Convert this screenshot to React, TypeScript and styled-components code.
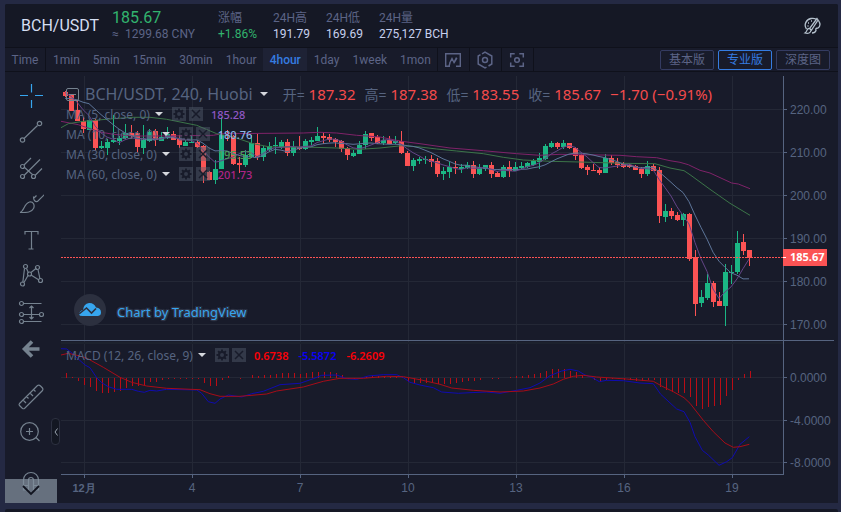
import React from 'react';
import styled, { createGlobalStyle } from 'styled-components';

const Global = createGlobalStyle`
  *, *::before, *::after { box-sizing: border-box; }
  body { margin: 0; background: #242943; font-family: Roboto, "Noto Sans CJK SC", sans-serif; font-size: 12px; color: #c7cce6; }
  button { font: inherit; color: inherit; background: none; border: 0; padding: 0; cursor: pointer; }
`;

const Page = styled.div`
  min-height: 100vh;
  padding: 4px 3px 0 5px;
  display: flex;
  flex-direction: column;
  gap: 6px;
  overflow: hidden;
`;
const Panel = styled.section`
  background: #181b2a;
  border-radius: 2px 2px 0 0;
  overflow: hidden;
`;
const NextPanel = styled.section`
  flex: 1;
  min-height: 3px;
  background: #151825;
  border-radius: 2px 2px 0 0;
`;
const Header = styled.header`
  height: 44px;
  display: flex;
  align-items: center;
  padding: 0 16px;
  background: #151825;
  border-bottom: 1px solid #0f111b;
`;
const Pair = styled.h1`
  margin: 0 12px 0 0;
  width: 79px;
  font-size: 16px;
  font-weight: 400;
  line-height: 20px;
  color: #d5def2;
  white-space: nowrap;
`;
const Stat = styled.div<{ $width: number }>`
  width: ${(p) => p.$width}px;
  display: flex;
  flex-direction: column;
  line-height: 16px;
  white-space: nowrap;
`;
const StatLabel = styled.span`
  color: #5c6486;
`;
const StatValue = styled.span<{ $tone?: 'up' | 'muted'; $large?: boolean }>`
  color: ${(p) => (p.$tone === 'up' ? '#32b36e' : p.$tone === 'muted' ? '#5c6486' : '#c7d0ee')};
  font-size: ${(p) => (p.$large ? 16 : 12)}px;
`;
const Approx = styled.span`
  display: inline-block;
  min-width: 10px;
`;
const ThemeButton = styled.button`
  margin-left: auto;
  width: 20px;
  height: 20px;
  color: #b4c0cc;
`;
const Toolbar = styled.nav`
  height: 24px;
  display: flex;
  align-items: stretch;
  border-bottom: 1px solid #0f111b;
  color: #5c6486;
`;
const Period = styled.button<{ $active?: boolean; $first?: boolean }>`
  padding: 0 6px 0 7px;
  white-space: nowrap;
  ${(p) => p.$first && 'border-right: 1px solid #0f111b; padding: 0 6px; min-width: 41px;'}
  ${(p) => p.$active && 'color: #357ce1; background: #1e2235; font-weight: 500;'}
`;
const IconTool = styled.button<{ $first?: boolean }>`
  width: 32px;
  display: flex;
  align-items: center;
  justify-content: center;
  border-right: 1px solid #0f111b;
  ${(p) => p.$first && 'border-left: 1px solid #0f111b; width: 33px;'}
`;
const Modes = styled.div`
  margin-left: auto;
  padding-right: 8px;
  display: flex;
  align-items: center;
  gap: 4px;
`;
const Mode = styled.button<{ $active?: boolean }>`
  width: 54px;
  height: 20px;
  border: 1px solid ${(p) => (p.$active ? '#357ce1' : '#343b61')};
  border-radius: 2px;
  color: ${(p) => (p.$active ? '#357ce1' : '#5c6486')};
  line-height: 18px;
`;
const Body = styled.div`
  display: grid;
  grid-template-columns: 56px minmax(0, 1fr) 55px;
  height: 431px;
`;
const Tools = styled.aside`
  position: relative;
  display: flex;
  flex-direction: column;
  padding: 6px 0 0 8px;
  color: #75828f;
`;
const Tool = styled.button<{ $gap?: number; $on?: boolean }>`
  flex: none;
  width: 36px;
  height: 36px;
  margin-top: ${(p) => p.$gap ?? 0}px;
  display: flex;
  align-items: center;
  justify-content: center;
  color: ${(p) => (p.$on ? '#37a6ef' : '#75828f')};
`;
const ScrollDown = styled.button`
  position: absolute;
  left: 0;
  bottom: 0;
  width: 52px;
  height: 24px;
  background: rgba(128, 142, 155, 0.75);
  color: #11141f;
`;
const Collapse = styled.button`
  position: absolute;
  right: 1px;
  top: 346px;
  width: 9px;
  height: 27px;
  display: flex;
  align-items: center;
  justify-content: center;
  background: #131722;
  border: 1px solid #2c3040;
  border-radius: 4px;
  color: #9aa5b0;
`;
const Plot = styled.div`
  position: relative;
  min-width: 0;
  overflow: hidden;
`;
const Canvas = styled.svg`
  display: block;
  width: 100%;
  height: 431px;
  font-family: "Liberation Sans", sans-serif;
  font-size: 12px;
`;
const Legend = styled.div`
  position: absolute;
  left: 5px;
  top: 12px;
  font-family: "Noto Sans", "Noto Sans CJK SC", sans-serif;
  color: #566480;
  white-space: nowrap;
`;
const TitleRow = styled.div`
  height: 20px;
  display: flex;
  align-items: center;
  font-size: 16px;
`;
const Toggle = styled.button`
  width: 13px;
  height: 13px;
  margin-right: 6px;
  border: 1px solid #75828f;
  border-radius: 2px;
  display: flex;
  align-items: center;
  justify-content: center;
`;
const Bar = styled.span`
  width: 7px;
  height: 1px;
  background: #75828f;
`;
const Caret = styled.span<{ $wide?: boolean }>`
  width: 0;
  height: 0;
  margin: 0 6px 0 ${(p) => (p.$wide ? 7 : 2)}px;
  border: 4px solid transparent;
  border-top-color: #d5d8dd;
  border-bottom: 0;
`;
const Quote = styled.span`
  margin-left: 9px;
  font-size: 14px;
`;
const Price = styled.span`
  font-size: 15px;
  color: #f54b4c;
`;
const Study = styled.div`
  height: 20px;
  display: flex;
  align-items: center;
  gap: 3px;
  font-size: 12px;
`;
const StudyButton = styled.button`
  width: 14px;
  height: 14px;
  display: flex;
  align-items: center;
  justify-content: center;
  background: rgba(84, 96, 110, 0.45);
  color: #181b2a;
`;
const StudyValue = styled.span<{ $color: string; $bold?: boolean }>`
  margin-left: 5px;
  font-family: "Noto Sans", sans-serif;
  font-size: 11px;
  font-weight: ${(p) => (p.$bold ? 600 : 500)};
  color: ${(p) => p.$color};
  & + & { margin-left: 7px; }
`;
const MacdLegend = styled(Legend)`
  top: 273px;
`;
const Credit = styled.a`
  position: absolute;
  left: 13px;
  top: 222px;
  display: flex;
  align-items: center;
  gap: 11px;
  color: #37a6ef;
  font: 13px/20px "Noto Sans", sans-serif;
  text-decoration: none;
  text-shadow: 0 0 2px #363c4e, 1px 1px 1px #363c4e, -1px -1px 1px #363c4e, 1px -1px 1px #363c4e, -1px 1px 1px #363c4e;
`;
const CreditText = styled.span`
  padding-top: 4px;
`;

/* One candle per entry: direction, high, body top, body bottom, low (thirds of a pixel). */
const CANDLES = `
R 57 60 73 76|R 65 67 116 116|R 85 114 147 147|R 136 147 172 183|G 144 144 175 175|R 142 143 228 237
G 208 222 228 231|G 202 210 228 249|G 130 204 210 212|G 192 198 207 218|G 155 183 198 200|R 160 183 192 200
R 178 183 225 244|G 158 204 228 246|G 172 180 207 210|R 172 178 204 222|G 180 195 207 207|G 165 186 198 200
R 178 185 203 203|R 190 200 219 228|G 205 210 222 222|G 190 210 213 214|R 205 210 225 229|R 220 222 303 333
R 296 300 325 325|G 265 291 324 336|G 136 190 291 291|R 175 190 193 207|R 190 192 276 280|R 255 273 278 303
G 235 249 280 284|G 190 213 254 257|R 187 213 255 264|G 222 227 255 267|G 210 222 234 238|G 195 219 223 246
G 205 210 225 230|R 200 210 243 252|G 207 225 243 252|R 192 225 231 234|G 200 207 231 234|G 195 204 210 220
G 165 192 206 207|R 180 192 198 216|R 186 195 204 210|R 197 201 210 226|R 205 207 231 240|R 225 228 249 264
G 235 243 252 254|G 207 219 245 246|G 178 186 219 231|R 183 183 198 207|R 190 195 213 215|G 192 204 213 219
R 192 204 215 216|G 192 207 213 216|R 177 207 243 246|R 237 243 282 282|G 258 264 282 297|G 255 261 266 276
G 252 260 263 276|R 249 261 270 285|R 258 267 306 315|G 285 297 306 324|G 270 285 300 318|R 267 285 289 306
G 276 285 290 303|G 270 279 288 290|R 267 279 305 318|G 276 288 306 309|G 278 279 291 297|R 270 279 306 318
R 297 303 315 315|G 280 285 315 318|R 267 285 297 315|G 270 285 297 297|G 270 281 288 290|G 270 273 285 288
G 262 266 279 282|G 243 258 270 291|G 216 222 261 264|G 207 213 225 228|R 210 213 225 230|G 204 213 225 231
R 213 213 228 231|R 225 228 251 264|R 246 249 288 291|R 280 285 294 309|R 276 294 297 297|R 285 293 303 309
G 246 258 303 303|R 249 258 273 279|R 258 269 280 288|R 270 275 284 288|R 275 278 286 288|R 278 282 293 294
R 285 291 306 318|G 267 282 306 312|R 275 281 297 297|R 285 294 432 453|G 396 417 435 450|R 408 417 432 441
R 421 429 444 447|G 423 426 444 462|R 423 426 561 567|R 534 555 696 732|G 654 675 693 705|G 606 633 678 685
R 627 633 690 705|R 660 687 702 702|G 576 600 702 762|G 579 599 603 636|G 477 513 600 606|R 486 510 537 549
R 534 534 558 582`
  .trim()
  .split(/[|\n]/)
  .map((row) => {
    const [dir, ...v] = row.split(' ');
    return { up: dir === 'G', v: v.map(Number) };
  });

const HISTOGRAM = [
  15, 2, -9, -22, -27, -38, -45, -46, -42, -40, -31, -24, -24, -22, -12, -12, -6, -3, -3, -3, -3, -3, -3, -15, -25, -25,
  -6, 5, 1, -3, 0, 8, 5, 8, 10, 13, 16, 14, 14, 11, 15, 17, 17, 17, 17, 15, 8, -2, -2, -1, 4, 5, 5, 6, 4, 5, 2, -12,
  -15, -15, -15, -15, -18, -18, -18, -15, -12, -8, -8, -6, 0, -2, -2, 0, 3, 5, 6, 9, 12, 15, 22, 26, 26, 26, 22, 17, 8,
  1, -6, -11, -6, -4, -3, -6, -6, -9, -8, -6, -6, -27, -36, -42, -45, -44, -57, -84, -93, -87, -84, -81, -54, -36, -6,
  11, 20,
];

const MA60 =
  '183,148 235,158 300,180 340,187 400,192 500,192 640,190 665,185 810,184 910,183 960,181 1010,183 1070,190 1140,195 1205,208 1260,215 1350,228 1450,236 1550,245 1620,250 1680,247 1740,248 1860,250 1910,254 1970,257 2010,266 2040,271 2065,278 2100,295 2130,303 2195,333 2215,336 2250,350';
const MA30 =
  '183,167 205,155 250,148 340,140 400,136 450,136 500,142 590,160 650,185 700,195 760,215 810,225 910,225 1010,228 1080,232 1140,228 1205,221 1260,225 1310,231 1370,237 1450,245 1510,256 1570,264 1650,268 1740,270 1870,274 1965,275 2010,288 2052,296 2070,308 2130,352 2190,394 2250,430';
const MACD =
  '183,41 200,42 213,52 235,72 255,90 270,98 290,128 305,143 325,155 350,163 395,163 415,169 433,172 450,166 470,168 500,163 590,165 605,175 625,200 645,205 660,192 685,180 725,186 755,176 790,169 840,149 900,145 940,131 965,121 1010,120 1040,131 1070,133 1105,123 1150,119 1190,119 1210,128 1230,142 1260,150 1300,158 1325,171 1375,175 1410,173 1460,171 1500,175 1550,166 1590,158 1620,144 1650,122 1685,108 1710,103 1735,108 1755,120 1775,127 1798,140 1820,136 1870,137 1920,144 1960,146 1982,178 2030,222 2052,230 2070,262 2085,305 2107,346 2125,360 2157,391 2180,380 2197,368 2220,328 2248,305';
const SIGNAL =
  '183,60 205,55 240,63 265,72 310,97 360,127 395,142 440,153 500,160 600,164 630,176 660,184 720,184 800,177 830,168 910,156 970,139 1020,130 1090,130 1160,124 1210,125 1260,134 1320,148 1355,159 1420,166 1500,171 1570,168 1620,159 1660,147 1690,133 1720,124 1750,121 1790,126 1880,132 1960,139 1985,153 2020,170 2052,188 2070,205 2110,256 2140,290 2175,324 2200,337 2220,335 2248,328';

const toPoints = (src: string, top: number) =>
  src
    .split(' ')
    .map((pair) => {
      const [x, y] = pair.split(',').map(Number);
      return `${(x / 3 - 61).toFixed(1)},${(y / 3 + top).toFixed(1)}`;
    })
    .join(' ');

const LEAD_IN = [110, 108, 106, 104, 100, 62, 60, 60, 58, 58];
const CLOSES = [...LEAD_IN, ...CANDLES.map((c) => (c.up ? c.v[1] : c.v[2]))];
const average = (n: number) =>
  CANDLES.map((_, i) => {
    const end = i + LEAD_IN.length + 1;
    const sum = CLOSES.slice(end - n, end).reduce((a, b) => a + b, 0);
    return `${i * 6 + 4},${(sum / n / 3).toFixed(1)}`;
  }).join(' ');

const PRICES = [220, 210, 200, 190, 180, 170];
const DAYS = ['12月', '4', '7', '10', '13', '16', '19'];
const MACD_TICKS: [string, number][] = [['0.0000', 305], ['-4.0000', 348], ['-8.0000', 390]];
const priceY = (i: number) => 37 + i * 43;

function Chart() {
  return (
    <Canvas role="img" aria-label="BCH/USDT 240">
      <g fill="#242836" shapeRendering="crispEdges">
        {DAYS.map((d, i) => <rect key={d} x={23 + i * 108} y="4" width="1" height="398" />)}
        {PRICES.map((p, i) => <rect key={p} x="0" y={priceY(i)} width="100%" height="1" />)}
        {MACD_TICKS.map(([t, y]) => <rect key={t} x="0" y={y} width="100%" height="1" />)}
        <rect x="0" y="270" width="100%" height="2" fill="#1c212d" />
      </g>
      <g shapeRendering="crispEdges">
        {CANDLES.map(({ up, v }, i) => {
          const [high, top, bottom, low] = v.map((n) => Math.round(n / 3));
          return (
            <g key={i} fill={up ? '#1bb684' : '#fb5354'}>
              <rect x={i * 6 + 4} y={high} width="1" height={low - high} />
              <rect x={i * 6 + 2} y={top} width="5" height={Math.max(1, bottom - top)} />
            </g>
          );
        })}
        {HISTOGRAM.map((h, i) => {
          const size = Math.round(Math.abs(h) / 3);
          return <rect key={i} x={i * 6 + 5} y={h > 0 ? 306 - size : 306} width="1" height={size} fill="#b90d16" />;
        })}
      </g>
      <g fill="none" strokeWidth="1">
        <polyline points={toPoints(MA60, 0)} stroke="#7f2369" />
        <polyline points={toPoints(MA30, 0)} stroke="#3c7549" />
        <polyline points={average(10)} stroke="#5d7599" />
        <polyline points={average(5)} stroke="#644587" />
        <polyline points={toPoints(MACD, 263)} stroke="#0f0bb0" />
        <polyline points={toPoints(SIGNAL, 263)} stroke="#a60c18" />
        <line x1="0" y1="185.5" x2="100%" y2="185.5" stroke="#fb5354" strokeDasharray="2 1" />
      </g>
      <g fill="#566480" shapeRendering="crispEdges">
        <rect x="0" y="268" width="100%" height="1" />
        <rect x="0" y="402" width="100%" height="1" />
        {DAYS.map((d, i) => <rect key={d} x={23 + i * 108} y="402" width="1" height="4" />)}
      </g>
      <g fill="#566480" textAnchor="middle">
        {DAYS.map((d, i) => (
          <text key={d} x={23 + i * 108} y="420" fontSize={i ? 12 : 11} fontWeight={i ? 400 : 700}>{d}</text>
        ))}
      </g>
    </Canvas>
  );
}

function PriceAxis() {
  return (
    <Canvas aria-label="Price axis">
      <g fill="#566480" shapeRendering="crispEdges">
        <rect x="0" y="4" width="1" height="399" />
        <rect x="0" y="268" width="51" height="1" />
        {PRICES.map((p, i) => <rect key={p} x="0" y={priceY(i)} width="4" height="1" />)}
        {MACD_TICKS.map(([t, y]) => <rect key={t} x="0" y={y} width="4" height="1" />)}
      </g>
      <g fill="#566480">
        {PRICES.map((p, i) => <text key={p} x="7" y={priceY(i) + 5}>{p.toFixed(2)}</text>)}
        {MACD_TICKS.map(([t, y]) => <text key={t} x="7" y={y + 5}>{t}</text>)}
      </g>
      <rect x="0" y="177" width="44" height="17" fill="#fb5354" />
      <rect x="0" y="185" width="3" height="1" fill="#fff" />
      <text x="7" y="189" fill="#fff" fontSize="11" fontWeight="700" fontFamily="Open Sans, sans-serif">185.67</text>
    </Canvas>
  );
}

const Gear = () => (
  <svg width="12" height="12" viewBox="0 0 12 12" fill="none" stroke="currentColor">
    <circle cx="6" cy="6" r="3" strokeWidth="2" />
    <path d="M6 .5v2M6 9.500v2M.5 6h2M9.500 6h2M2.100 2.100l1.400 1.400M8.500 8.500l1.400 1.400M2.100 9.900l1.400-1.400M8.500 3.500l1.400-1.400" strokeWidth="1.800" />
  </svg>
);
const Cross = () => (
  <svg width="12" height="12" viewBox="0 0 12 12" stroke="currentColor" strokeWidth="1.500">
    <path d="M2 2l8 8M10 2l-8 8" />
  </svg>
);
const StudyTools = ({ name }: { name: string }) => (
  <>
    <StudyButton aria-label={`${name} settings`}><Gear /></StudyButton>
    <StudyButton aria-label={`Remove ${name}`}><Cross /></StudyButton>
  </>
);

const Icon = ({ d, children }: { d?: string; children?: React.ReactNode }) => (
  <svg width="26" height="26" viewBox="0 0 26 26" fill="none" stroke="currentColor" strokeWidth="1.200">
    {d && <path d={d} />}
    {children}
  </svg>
);

const TOOLS: { name: string; gap?: number; on?: boolean; icon: React.ReactNode }[] = [
  { name: 'Crosshair', on: true, icon: <Icon d="M13.500 1v8.500M13.500 17v8M2 12.500h8M17 12.500h8" /> },
  { name: 'Trend line', icon: <Icon d="M6 19.500L19.500 6.500"><circle cx="4.500" cy="21" r="2.200" /><circle cx="21.500" cy="4.500" r="2.200" /></Icon> },
  { name: 'Pitchfork', icon: <Icon d="M6 10L13 3M6 20.500L22 4.500M17 20.500L24 13.500M6 12l9 8"><circle cx="4.500" cy="11.500" r="2" /><circle cx="4.500" cy="21.500" r="2" /><circle cx="15.500" cy="21.500" r="2" /></Icon> },
  { name: 'Brush', icon: <Icon d="M2 21.500c4-1 4-9 9.500-10.500c4-.5 5.500 3 4 6.500c-2 4-6 4-13.500 4zM15.500 5.500c0 3 1 5.500 4 5l7-7M15.500 7.500l3-3" /> },
  { name: 'Text', icon: <Icon d="M7 7.500V4.500h13V7.500M13.500 4.500v17.500M10.500 22h5" /> },
  { name: 'Pattern', icon: <Icon d="M6.500 5.500L4.800 19.500M8.500 5.500l2 4.500M13 9.500l5.500-4.500M20 6.500l2 9.500M13 12l8 5M10 12.500L6 19.500"><circle cx="7.500" cy="3.500" r="2" /><circle cx="11.500" cy="11" r="2" /><circle cx="19.500" cy="4.500" r="2" /><circle cx="22.500" cy="17.500" r="2" /><circle cx="4.500" cy="21" r="2" /></Icon> },
  { name: 'Position', gap: 1, icon: <Icon d="M5.500 3.500h18M5.500 14.500h16M5.500 21.500h18M13.500 6v13M11.500 8l2-2l2 2M11.500 17l2 2l2-2"><circle cx="3.500" cy="3.500" r="2" /><circle cx="3.500" cy="14.500" r="2" /><circle cx="23.500" cy="14.500" r="2" /><circle cx="3.500" cy="21.500" r="2" /></Icon> },
  { name: 'Back', icon: <Icon><path d="M21.500 13H8M14 5.500L6.500 13L14 20.500" strokeWidth="3.600" /></Icon> },
  { name: 'Measure', gap: 12, icon: <Icon d="M1.500 19.500L19.500 1.500q1.500-1 3 .5l1.500 1.500q1.500 1.500.5 3L6.500 24.500q-1 .5-2 0L1.500 21.500q-.8-1 0-2zM5 16l3 3M8.500 12.500l2 2M12 9l3 3M15.500 5.500l2 2" /> },
  { name: 'Zoom in', icon: <Icon d="M8 11.500h7M11.500 8v7M18 17.500l3.500 3.500"><circle cx="11.500" cy="11.500" r="8.800" /></Icon> },
  { name: 'Magnet', gap: 12, icon: <Icon d="M5.500 22V12a7.500 7.500 0 0 1 15 0V22h-5V12a2.500 2.500 0 0 0-5 0V22zM5.500 17.500h5M15.500 17.500h5" /> },
];

const STUDIES = [
  { name: 'MA (5, close, 0)', value: '185.28', color: '#8f57c4' },
  { name: 'MA (10, close, 0)', value: '180.76', color: '#8fb4e6' },
  { name: 'MA (30, close, 0)', value: '195.53', color: '#4c9e57' },
  { name: 'MA (60, close, 0)', value: '201.73', color: '#b02487' },
];
const QUOTES = [['开', '187.32'], ['高', '187.38'], ['低', '183.55'], ['收', '185.67']];
const PERIODS = ['Time', '1min', '5min', '15min', '30min', '1hour', '4hour', '1day', '1week', '1mon'];

export default function App() {
  return (
    <>
      <Global />
      <Page>
        <Panel>
          <Header>
            <Pair>BCH/USDT</Pair>
            <Stat $width={106}>
              <StatValue $tone="up" $large>185.67</StatValue>
              <StatValue $tone="muted"><Approx>≈</Approx> 1299.68 CNY</StatValue>
            </Stat>
            <Stat $width={55}><StatLabel>涨幅</StatLabel><StatValue $tone="up">+1.86%</StatValue></Stat>
            <Stat $width={53}><StatLabel>24H高</StatLabel><StatValue>191.79</StatValue></Stat>
            <Stat $width={53}><StatLabel>24H低</StatLabel><StatValue>169.69</StatValue></Stat>
            <Stat $width={80}><StatLabel>24H量</StatLabel><StatValue>275,127 BCH</StatValue></Stat>
            <ThemeButton aria-label="Theme">
              <svg width="20" height="20" viewBox="0 0 20 20" fill="none" stroke="currentColor" strokeWidth="1.300">
                <path d="M4.500 13C1.500 9 4 3.500 9 2.500c2-.4 3.500-.2 5 .5M16.500 4.500c2 3 1.500 6-.5 7.500c-2 0-2.500.5-2 2.500c-.5 1.500-2 2.500-4 2.500M15 2.500L7.500 12.500l2 1.500L16 4zM7 12.500c-2.500 0-1.500 3-4 4.500c3 1 6 0 6-3M6 7h1M9 5h1M5.500 10h1" />
              </svg>
            </ThemeButton>
          </Header>
          <Toolbar>
            {PERIODS.map((p, i) => <Period key={p} $first={i === 0} $active={p === '4hour'}>{p}</Period>)}
            <IconTool $first aria-label="Indicators">
              <svg width="16" height="16" viewBox="0 0 16 16" fill="none" stroke="currentColor" strokeWidth="1.400">
                <path d="M5 14.300H.7V1.700h14.600v12.600H11M4.500 11.500l2.500-5l2 4l2.500-5M4 14l1-3M9 11l3-5" />
              </svg>
            </IconTool>
            <IconTool aria-label="Settings">
              <svg width="16" height="18" viewBox="0 0 16 18" fill="none" stroke="currentColor" strokeWidth="1.500">
                <path d="M5 2.800L8 1l6.800 4v8L11.500 15M3.500 3.700L1.200 5v8L8 17l1.500-.9" /><circle cx="8" cy="9" r="2.500" />
              </svg>
            </IconTool>
            <IconTool aria-label="Full screen">
              <svg width="16" height="16" viewBox="0 0 16 16" fill="none" stroke="currentColor" strokeWidth="1.500">
                <path d="M1.700 5.500V1.700h4M10.300 1.700h4v3.800M14.300 10.500v3.800h-4M5.700 14.300h-4v-3.800" /><circle cx="8" cy="8" r="2.300" />
              </svg>
            </IconTool>
            <Modes>
              <Mode>基本版</Mode>
              <Mode $active>专业版</Mode>
              <Mode>深度图</Mode>
            </Modes>
          </Toolbar>
          <Body>
            <Tools>
              {TOOLS.map((t) => <Tool key={t.name} aria-label={t.name} $gap={t.gap} $on={t.on}>{t.icon}</Tool>)}
              <ScrollDown aria-label="Scroll down">
                <svg width="18" height="12" viewBox="0 0 18 12" fill="none" stroke="currentColor" strokeWidth="1.800"><path d="M1 2l8 8l8-8" /></svg>
              </ScrollDown>
              <Collapse aria-label="Collapse tools">
                <svg width="4" height="8" viewBox="0 0 4 8" fill="none" stroke="currentColor"><path d="M3.500.5L1 4l2.500 3.500" /></svg>
              </Collapse>
            </Tools>
            <Plot>
              <Chart />
              <Legend>
                <TitleRow>
                  <Toggle aria-label="Collapse legend"><Bar /></Toggle>
                  BCH/USDT, 240, Huobi
                  <Caret $wide />
                  {QUOTES.map(([k, v]) => <Quote key={k}>{k}=<Price> {v}</Price></Quote>)}
                  <Quote><Price>−1.70 (−0.91%)</Price></Quote>
                </TitleRow>
                {STUDIES.map((s) => (
                  <Study key={s.name}>
                    {s.name}<Caret /><StudyTools name={s.name} />
                    <StudyValue $color={s.color}>{s.value}</StudyValue>
                  </Study>
                ))}
              </Legend>
              <MacdLegend>
                <Study>
                  MACD (12, 26, close, 9)<Caret /><StudyTools name="MACD" />
                  <StudyValue $bold $color="#fb0007">0.6738</StudyValue>
                  <StudyValue $bold $color="#0a00f5">-5.5872</StudyValue>
                  <StudyValue $bold $color="#fb0007">-6.2609</StudyValue>
                </Study>
              </MacdLegend>
              <Credit href="#tradingview">
                <svg width="32" height="32" viewBox="0 0 32 32">
                  <circle cx="16" cy="16" r="16" fill="#2c303f" />
                  <path d="M5 20.500q.5-4 4-4.500q.5-6 6-7q5-.3 7 4.500q5 .5 5 5q0 3-3 3.500H8.500q-3 0-3.500-1.500z" fill="#37a6ef" />
                  <path d="M5 20l7.500-6l5 5l4.500-4.500" fill="none" stroke="#2c303f" strokeWidth="1.600" />
                </svg>
                <CreditText>Chart by TradingView</CreditText>
              </Credit>
            </Plot>
            <PriceAxis />
          </Body>
        </Panel>
        <NextPanel />
      </Page>
    </>
  );
}
